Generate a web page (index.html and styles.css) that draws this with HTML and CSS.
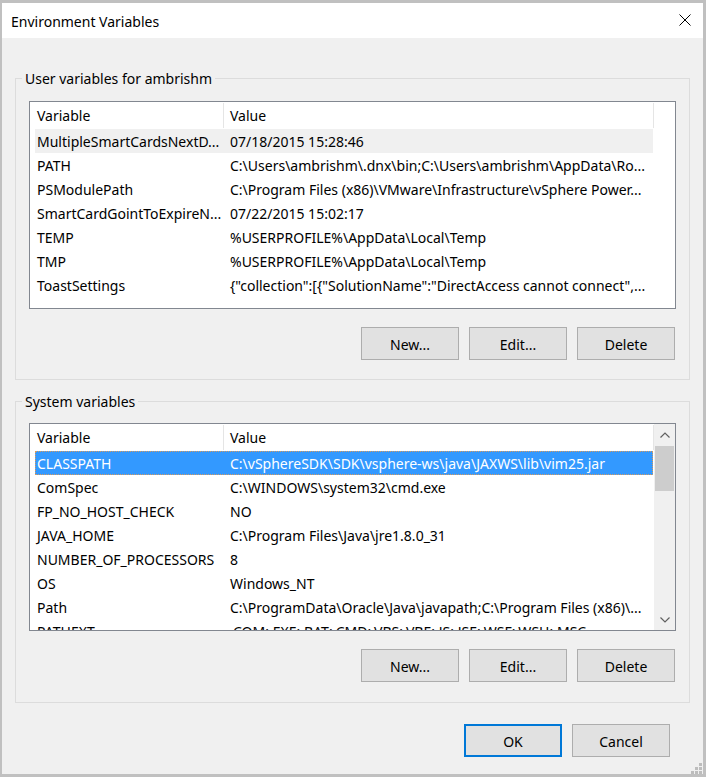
FILE: index.html
```html
<!DOCTYPE html>
<html lang="en">
<head>
  <meta charset="UTF-8" />
  <title>Environment Variables</title>
  <link rel="stylesheet" href="styles.css">
</head>
<body>
  <div class="window">
    <div class="titlebar">
      <span class="title">Environment Variables</span>
      <svg class="close" width="12" height="12" viewBox="0 0 12 12">
        <path d="M0.5 0.5 L11.5 11.5 M11.5 0.5 L0.5 11.5" stroke="#000" stroke-width="1" fill="none"/>
      </svg>
    </div>

    <div class="content">
      <fieldset class="group group-user">
        <legend>User variables for ambrishm</legend>
        <div class="list">
          <div class="list-main">
            <div class="list-header">
              <div class="head-name">Variable</div>
              <div class="head-value">Value</div>
            </div>
            <div class="row row-hover"><div class="cell">MultipleSmartCardsNextD...</div><div class="cell">07/18/2015 15:28:46</div></div>
            <div class="row"><div class="cell">PATH</div><div class="cell">C:\Users\ambrishm\.dnx\bin;C:\Users\ambrishm\AppData\Ro...</div></div>
            <div class="row"><div class="cell">PSModulePath</div><div class="cell">C:\Program Files (x86)\VMware\Infrastructure\vSphere Power...</div></div>
            <div class="row"><div class="cell">SmartCardGointToExpireN...</div><div class="cell">07/22/2015 15:02:17</div></div>
            <div class="row"><div class="cell">TEMP</div><div class="cell">%USERPROFILE%\AppData\Local\Temp</div></div>
            <div class="row"><div class="cell">TMP</div><div class="cell">%USERPROFILE%\AppData\Local\Temp</div></div>
            <div class="row"><div class="cell">ToastSettings</div><div class="cell">{"collection":[{"SolutionName":"DirectAccess cannot connect",...</div></div>
          </div>
        </div>
        <div class="buttons">
          <button class="btn">New...</button>
          <button class="btn">Edit...</button>
          <button class="btn">Delete</button>
        </div>
      </fieldset>

      <fieldset class="group group-system">
        <legend>System variables</legend>
        <div class="list">
          <div class="list-main">
            <div class="list-header">
              <div class="head-name">Variable</div>
              <div class="head-value">Value</div>
            </div>
            <div class="row row-selected"><div class="cell">CLASSPATH</div><div class="cell">C:\vSphereSDK\SDK\vsphere-ws\java\JAXWS\lib\vim25.jar</div></div>
            <div class="row"><div class="cell">ComSpec</div><div class="cell">C:\WINDOWS\system32\cmd.exe</div></div>
            <div class="row"><div class="cell">FP_NO_HOST_CHECK</div><div class="cell">NO</div></div>
            <div class="row"><div class="cell">JAVA_HOME</div><div class="cell">C:\Program Files\Java\jre1.8.0_31</div></div>
            <div class="row"><div class="cell">NUMBER_OF_PROCESSORS</div><div class="cell">8</div></div>
            <div class="row"><div class="cell">OS</div><div class="cell">Windows_NT</div></div>
            <div class="row"><div class="cell">Path</div><div class="cell">C:\ProgramData\Oracle\Java\javapath;C:\Program Files (x86)\...</div></div>
            <div class="row"><div class="cell">PATHEXT</div><div class="cell">.COM;.EXE;.BAT;.CMD;.VBS;.VBE;.JS;.JSE;.WSF;.WSH;.MSC</div></div>
          </div>
          <div class="scrollbar">
            <div class="sb-arrow">
              <svg width="10" height="6" viewBox="0 0 10 6"><path d="M0.5 5.5 L5 1 L9.5 5.5" stroke="#606060" stroke-width="1.2" fill="none"/></svg>
            </div>
            <div class="sb-thumb"></div>
            <div class="sb-track"></div>
            <div class="sb-arrow">
              <svg width="10" height="6" viewBox="0 0 10 6"><path d="M0.5 0.5 L5 5 L9.5 0.5" stroke="#606060" stroke-width="1.2" fill="none"/></svg>
            </div>
          </div>
        </div>
        <div class="buttons">
          <button class="btn">New...</button>
          <button class="btn">Edit...</button>
          <button class="btn">Delete</button>
        </div>
      </fieldset>

      <div class="footer">
        <button class="btn btn-default">OK</button>
        <button class="btn">Cancel</button>
      </div>
    </div>

    <svg class="grip" width="11" height="11" viewBox="0 0 11 11">
      <rect x="8" y="0" width="3" height="3" fill="#bdbdbd"/>
      <rect x="4" y="4" width="3" height="3" fill="#bdbdbd"/>
      <rect x="8" y="4" width="3" height="3" fill="#bdbdbd"/>
      <rect x="0" y="8" width="3" height="3" fill="#bdbdbd"/>
      <rect x="4" y="8" width="3" height="3" fill="#bdbdbd"/>
      <rect x="8" y="8" width="3" height="3" fill="#bdbdbd"/>
    </svg>
  </div>
</body>
</html>
```

FILE: styles.css
```css
* {
  margin: 0;
  padding: 0;
  box-sizing: border-box;
}

body {
  font-family: "Noto Sans", "Open Sans", sans-serif;
  font-size: 14px;
  color: #000;
  background: #c0c0c0;
}

.window {
  position: relative;
  width: 706px;
  height: 777px;
  border-style: solid;
  border-color: #c0c0c0;
  border-width: 3px 3px 3px 2px;
  background: #f0f0f0;
  display: flex;
  flex-direction: column;
}

.titlebar {
  height: 35px;
  background: #fff;
  display: flex;
  align-items: center;
  justify-content: space-between;
  padding: 0 12px 0 9px;
}

.title {
  padding-top: 1px;
}

.close {
  display: block;
  margin-top: -1px;
}

.content {
  flex: 1;
  display: flex;
  flex-direction: column;
  padding: 30px 13px 0;
}

.group {
  border: 1px solid #dcdcdc;
  padding: 13px 13px 19px;
}

.group-system {
  margin-top: 11px;
  padding: 12px 13px 20px;
}

.group legend {
  padding: 1px 3px 0;
  margin-left: -7px;
  line-height: 19px;
}

.list {
  height: 208px;
  border: 1px solid #828790;
  background: #fff;
  display: flex;
  overflow: hidden;
}

.list-main {
  flex: 1;
  overflow: hidden;
}

.list-header {
  display: flex;
  height: 27px;
}

.head-name,
.head-value {
  border-right: 1px solid #e5e5e5;
  margin-top: 1px;
  height: 25px;
  padding-top: 1px;
  line-height: 24px;
}

.head-name {
  width: 194px;
  padding-left: 7px;
}

.head-value {
  width: 430px;
  padding-left: 6px;
}

.row {
  display: grid;
  grid-template-columns: 193px 425px;
  width: 618px;
  height: 24px;
  margin-left: 5px;
  line-height: 23px;
}

.cell {
  padding: 1px 2px 0;
  white-space: nowrap;
  overflow: hidden;
}

.row-hover {
  background: #f0f0f0;
}

.row-selected {
  background: #3399ff;
  color: #fff;
  outline: 1px dotted #d79a5e;
  outline-offset: -1px;
}

.scrollbar {
  width: 21px;
  background: #f0f0f0;
  display: flex;
  flex-direction: column;
}

.sb-arrow {
  height: 21px;
  display: flex;
  align-items: center;
  justify-content: center;
}

.sb-arrow svg {
  display: block;
}

.sb-thumb {
  height: 45px;
  margin: 1px 1px 0;
  background: #cdcdcd;
}

.sb-track {
  flex: 1;
}

.buttons,
.footer {
  display: flex;
  justify-content: flex-end;
  gap: 10px;
}

.buttons {
  margin-top: 18px;
  padding-right: 1px;
}

.footer {
  margin-top: 21px;
  padding-right: 20px;
}

.btn {
  width: 98px;
  height: 33px;
  padding-top: 1px;
  background: #e1e1e1;
  border: 1px solid #adadad;
  font-family: inherit;
  font-size: 14px;
  color: #000;
}

.btn-default {
  border: 2px solid #0078d7;
}

.grip {
  position: absolute;
  right: 1px;
  bottom: 0;
  display: block;
}
```
